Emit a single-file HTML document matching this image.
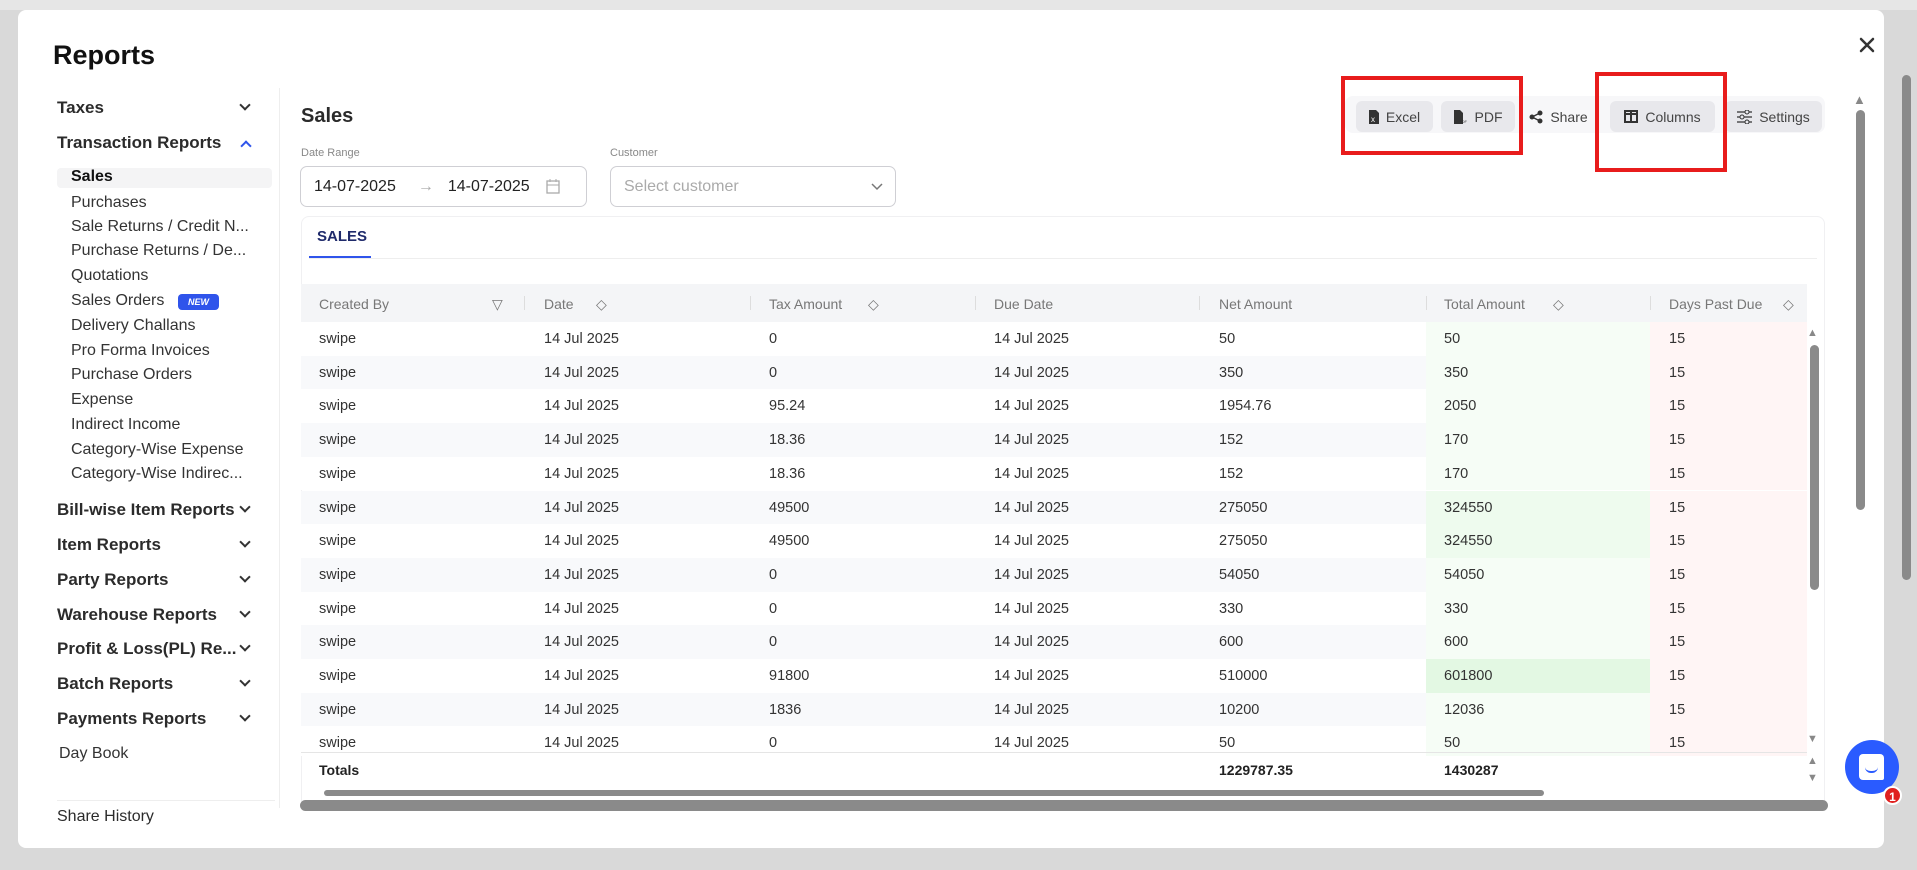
<!DOCTYPE html>
<html><head><meta charset="utf-8"><style>
*{box-sizing:border-box;margin:0;padding:0}
body{width:1917px;height:870px;overflow:hidden;background:#d9d9d9;font-family:"Liberation Sans",sans-serif;color:#222;position:relative}
.abs{position:absolute}
.modal{left:18px;top:10px;width:1866px;height:838px;background:#fff;border-radius:8px}
.side{font-size:17px;color:#333}
.side .h{position:absolute;left:57px;font-weight:bold;font-size:17px;color:#2b2b2b}
.side .s{position:absolute;left:71px;font-size:16px;color:#333}
.chev{position:absolute;left:241px;width:8px;height:8px;border-right:2px solid #333;border-bottom:2px solid #333;transform:rotate(45deg)}
.btn{position:absolute;top:101px;height:31px;background:#e8e8ec;border-radius:6px;font-size:14px;color:#444;display:flex;align-items:center;justify-content:center;gap:7px}
.red{position:absolute;border:4px solid #e81c1c}
.inp{position:absolute;top:166px;height:41px;border:1px solid #cfcfd4;border-radius:7px;font-size:16px;display:flex;align-items:center}
.th{position:absolute;top:284px;height:38px;left:301px;width:1506px;background:#f4f5f7;font-size:14px;color:#777}
.th span{position:absolute;top:12px}
.sep{position:absolute;top:12px;width:1px;height:14px;background:#ddd}
.row{position:absolute;left:301px;width:1506px;height:33.7px;font-size:14.5px;color:#333}
.row span{position:absolute;top:9px}
</style></head><body>
<div class="abs" style="left:0;top:0;width:1917px;height:10px;background:#e6e6e6"></div>
<div class="abs" style="left:1902px;top:75px;width:9px;height:505px;background:#8a8a8a;border-radius:5px"></div>
<div class="abs modal"></div>
<div class="abs" style="left:53px;top:40px;font-size:27px;font-weight:bold;color:#111">Reports</div>
<svg class="abs" style="left:1859px;top:37px" width="16" height="16"><path d="M2 2l12 12M14 2L2 14" stroke="#333" stroke-width="2.5" stroke-linecap="round"/></svg>
<div class="side">
<div class="h" style="top:98px">Taxes</div><div class="chev" style="top:101px"></div>
<div class="h" style="top:133px">Transaction Reports</div><div class="abs" style="left:242px;top:142px;width:8px;height:8px;border-left:2px solid #2f54eb;border-top:2px solid #2f54eb;transform:rotate(45deg)"></div>
<div class="abs" style="left:57px;top:168px;width:215px;height:20px;background:#f4f4f5;border-radius:4px"></div>
<div class="s" style="top:168px;font-weight:bold;color:#111">Sales</div>
<div class="s" style="top:194px">Purchases</div>
<div class="s" style="top:218px">Sale Returns / Credit N...</div>
<div class="s" style="top:242px">Purchase Returns / De...</div>
<div class="s" style="top:267px">Quotations</div>
<div class="s" style="top:292px">Sales Orders</div>
<div class="abs" style="left:178px;top:294px;width:41px;height:16px;background:#2f54eb;border-radius:4px;color:#fff;font-size:9px;font-weight:bold;font-style:italic;text-align:center;line-height:16px">NEW</div>
<div class="s" style="top:317px">Delivery Challans</div>
<div class="s" style="top:342px">Pro Forma Invoices</div>
<div class="s" style="top:366px">Purchase Orders</div>
<div class="s" style="top:391px">Expense</div>
<div class="s" style="top:416px">Indirect Income</div>
<div class="s" style="top:441px">Category-Wise Expense</div>
<div class="s" style="top:465px">Category-Wise Indirec...</div>
<div class="h" style="top:500px">Bill-wise Item Reports</div><div class="chev" style="top:503px"></div>
<div class="h" style="top:535px">Item Reports</div><div class="chev" style="top:538px"></div>
<div class="h" style="top:570px">Party Reports</div><div class="chev" style="top:573px"></div>
<div class="h" style="top:605px">Warehouse Reports</div><div class="chev" style="top:608px"></div>
<div class="h" style="top:639px">Profit &amp; Loss(PL) Re...</div><div class="chev" style="top:642px"></div>
<div class="h" style="top:674px">Batch Reports</div><div class="chev" style="top:677px"></div>
<div class="h" style="top:709px">Payments Reports</div><div class="chev" style="top:712px"></div>
<div class="s" style="top:745px;left:59px">Day Book</div>
<div class="abs" style="left:57px;top:800px;width:218px;height:1px;background:#eee"></div>
<div class="h" style="top:808px;font-weight:normal;font-size:16px">Share History</div>
</div>
<div class="abs" style="left:279px;top:88px;width:1px;height:720px;background:#eee"></div>
<div class="abs" style="left:301px;top:105px;font-size:20px;font-weight:bold;color:#2b2b2b">Sales</div>
<div class="abs" style="left:1345px;top:96px;width:480px;height:37px;background:#f7f7f9;border-radius:8px"></div>
<div class="btn" style="left:1356px;width:77px"><svg width="10" height="14"><path d="M0 0h7l3 3v11H0z" fill="#333"/><text x="2" y="12" font-size="8" fill="#fff" font-family="Liberation Sans">x</text></svg>Excel</div>
<div class="btn" style="left:1441px;width:74px"><svg width="14" height="14"><path d="M0 0h6l3 3v11H0z" fill="#333"/><text x="5" y="13" font-size="4" fill="#333" font-family="Liberation Sans">PDF</text></svg>PDF</div>
<div class="btn" style="left:1522px;width:73px;background:transparent"><svg width="14" height="14"><circle cx="11" cy="3" r="2.5" fill="#333"/><circle cx="3" cy="7" r="2.5" fill="#333"/><circle cx="11" cy="11" r="2.5" fill="#333"/><path d="M3 7L11 3M3 7l8 4" stroke="#333" stroke-width="1.5"/></svg>Share</div>
<div class="btn" style="left:1610px;width:105px"><svg width="14" height="13"><rect x="1" y="1" width="12" height="11" fill="none" stroke="#333" stroke-width="2"/><path d="M7 1v11M1 4h12" stroke="#333" stroke-width="2"/></svg>Columns</div>
<div class="btn" style="left:1725px;width:97px"><svg width="15" height="14"><path d="M0 2h15M0 7h15M0 12h15" stroke="#333" stroke-width="1.3"/><circle cx="10" cy="2" r="2" fill="#e8e8ec" stroke="#333"/><circle cx="5" cy="7" r="2" fill="#e8e8ec" stroke="#333"/><circle cx="10" cy="12" r="2" fill="#e8e8ec" stroke="#333"/></svg>Settings</div>
<div class="red" style="left:1341px;top:76px;width:182px;height:79px"></div>
<div class="red" style="left:1595px;top:72px;width:132px;height:100px"></div>
<div class="abs" style="left:301px;top:147px;font-size:11px;color:#888">Date Range</div>
<div class="abs" style="left:610px;top:147px;font-size:11px;color:#888">Customer</div>
<div class="inp" style="left:300px;width:287px"><span style="margin-left:13px;color:#222">14-07-2025</span><span style="margin-left:22px;color:#aaa">→</span><span style="margin-left:14px;color:#222">14-07-2025</span><svg style="margin-left:16px" width="14" height="15"><rect x="1" y="2" width="12" height="12" fill="none" stroke="#aaa" stroke-width="1.3"/><path d="M1 6h12M4 0v3M10 0v3" stroke="#aaa"/></svg></div>
<div class="inp" style="left:610px;width:286px;color:#aaa"><span style="margin-left:13px">Select customer</span><svg style="position:absolute;right:12px" width="12" height="8"><path d="M1 1l5 5 5-5" fill="none" stroke="#777" stroke-width="1.5"/></svg></div>
<div class="abs" style="left:301px;top:216px;width:1524px;height:592px;border:1px solid #f0f0f2;border-radius:8px"></div>
<div class="abs" style="left:317px;top:228px;font-size:15px;font-weight:bold;color:#1f2a6b">SALES</div>
<div class="abs" style="left:309px;top:256px;width:62px;height:3px;background:#2f54eb"></div>
<div class="abs" style="left:309px;top:258px;width:1508px;height:1px;background:#eee"></div>
<div class="th">
<span style="left:18px">Created By</span><span style="left:191px">▽</span>
<span style="left:243px">Date</span><span style="left:295px">◇</span>
<span style="left:468px">Tax Amount</span><span style="left:567px">◇</span>
<span style="left:693px">Due Date</span>
<span style="left:918px">Net Amount</span>
<span style="left:1143px">Total Amount</span><span style="left:1252px">◇</span>
<span style="left:1368px">Days Past Due</span><span style="left:1482px">◇</span>
<div class="sep" style="left:223px"></div><div class="sep" style="left:449px"></div><div class="sep" style="left:674px"></div><div class="sep" style="left:898px"></div><div class="sep" style="left:1125px"></div><div class="sep" style="left:1349px"></div>
</div>
<div id="rows"></div>
<div class="abs" style="left:301px;top:752px;width:1506px;height:1px;background:#e5e5e5"></div>
<div class="abs" style="left:319px;top:762px;font-size:14px;font-weight:bold">Totals</div>
<div class="abs" style="left:1219px;top:762px;font-size:14px;font-weight:bold">1229787.35</div>
<div class="abs" style="left:1444px;top:762px;font-size:14px;font-weight:bold">1430287</div>
<div class="abs" style="left:1810px;top:345px;width:9px;height:245px;background:#8a8a8a;border-radius:5px"></div>
<div class="abs" style="left:1807px;top:327px;font-size:11px;color:#888">▲</div>
<div class="abs" style="left:1807px;top:733px;font-size:11px;color:#888">▼</div>
<div class="abs" style="left:1807px;top:755px;font-size:11px;color:#888">▲</div>
<div class="abs" style="left:1807px;top:772px;font-size:11px;color:#888">▼</div>
<div class="abs" style="left:324px;top:790px;width:1220px;height:6px;background:#8a8a8a;border-radius:3px"></div>
<div class="abs" style="left:300px;top:800px;width:1528px;height:11px;background:#8a8a8a;border-radius:6px"></div>
<div class="abs" style="left:1856px;top:110px;width:9px;height:400px;background:#8a8a8a;border-radius:5px"></div>
<div class="abs" style="left:1853px;top:92px;font-size:13px;color:#888">▲</div>
<div class="abs" style="left:1845px;top:740px;width:54px;height:54px;border-radius:50%;background:#2a5bff"></div>
<div class="abs" style="left:1859px;top:754px;width:25px;height:26px;background:#fff;border-radius:4px 4px 2px 4px"></div>
<div class="abs" style="left:1865px;top:767px;width:13px;height:6px;border-bottom:2px solid #2a5bff;border-radius:0 0 8px 8px"></div>
<div class="abs" style="left:1883px;top:786px;width:19px;height:19px;border-radius:50%;background:#e0201f;color:#fff;font-size:12px;font-weight:bold;text-align:center;line-height:19px;border:2px solid #fff">1</div>
<script>
var d=[["0","50","50",0],["0","350","350",0],["95.24","1954.76","2050",0],["18.36","152","170",0],["18.36","152","170",0],["49500","275050","324550",1],["49500","275050","324550",1],["0","54050","54050",0],["0","330","330",0],["0","600","600",0],["91800","510000","601800",2],["1836","10200","12036",0],["0","50","50",0]];
var h="";d.forEach(function(r,i){var t=322+i*33.7;var bg=i%2?"#f8f9fb":"#fff";var hgt=i==12?30:33.7;var g=r[3]==2?"#e3f8e3":r[3]==1?"#eefbee":"#f6fdf6";
h+='<div class="row" style="top:'+t+'px;height:'+hgt+'px;background:'+bg+';overflow:hidden"><div style="position:absolute;left:1125px;width:224px;top:0;bottom:0;background:'+g+'"></div><div style="position:absolute;left:1349px;width:157px;top:0;bottom:0;background:#fff5f5"></div><span style="left:18px">swipe</span><span style="left:243px">14 Jul 2025</span><span style="left:468px">'+r[0]+'</span><span style="left:693px">14 Jul 2025</span><span style="left:918px">'+r[1]+'</span><span style="left:1143px">'+r[2]+'</span><span style="left:1368px">15</span></div>';});
document.getElementById("rows").innerHTML=h;
</script>
</body></html>
